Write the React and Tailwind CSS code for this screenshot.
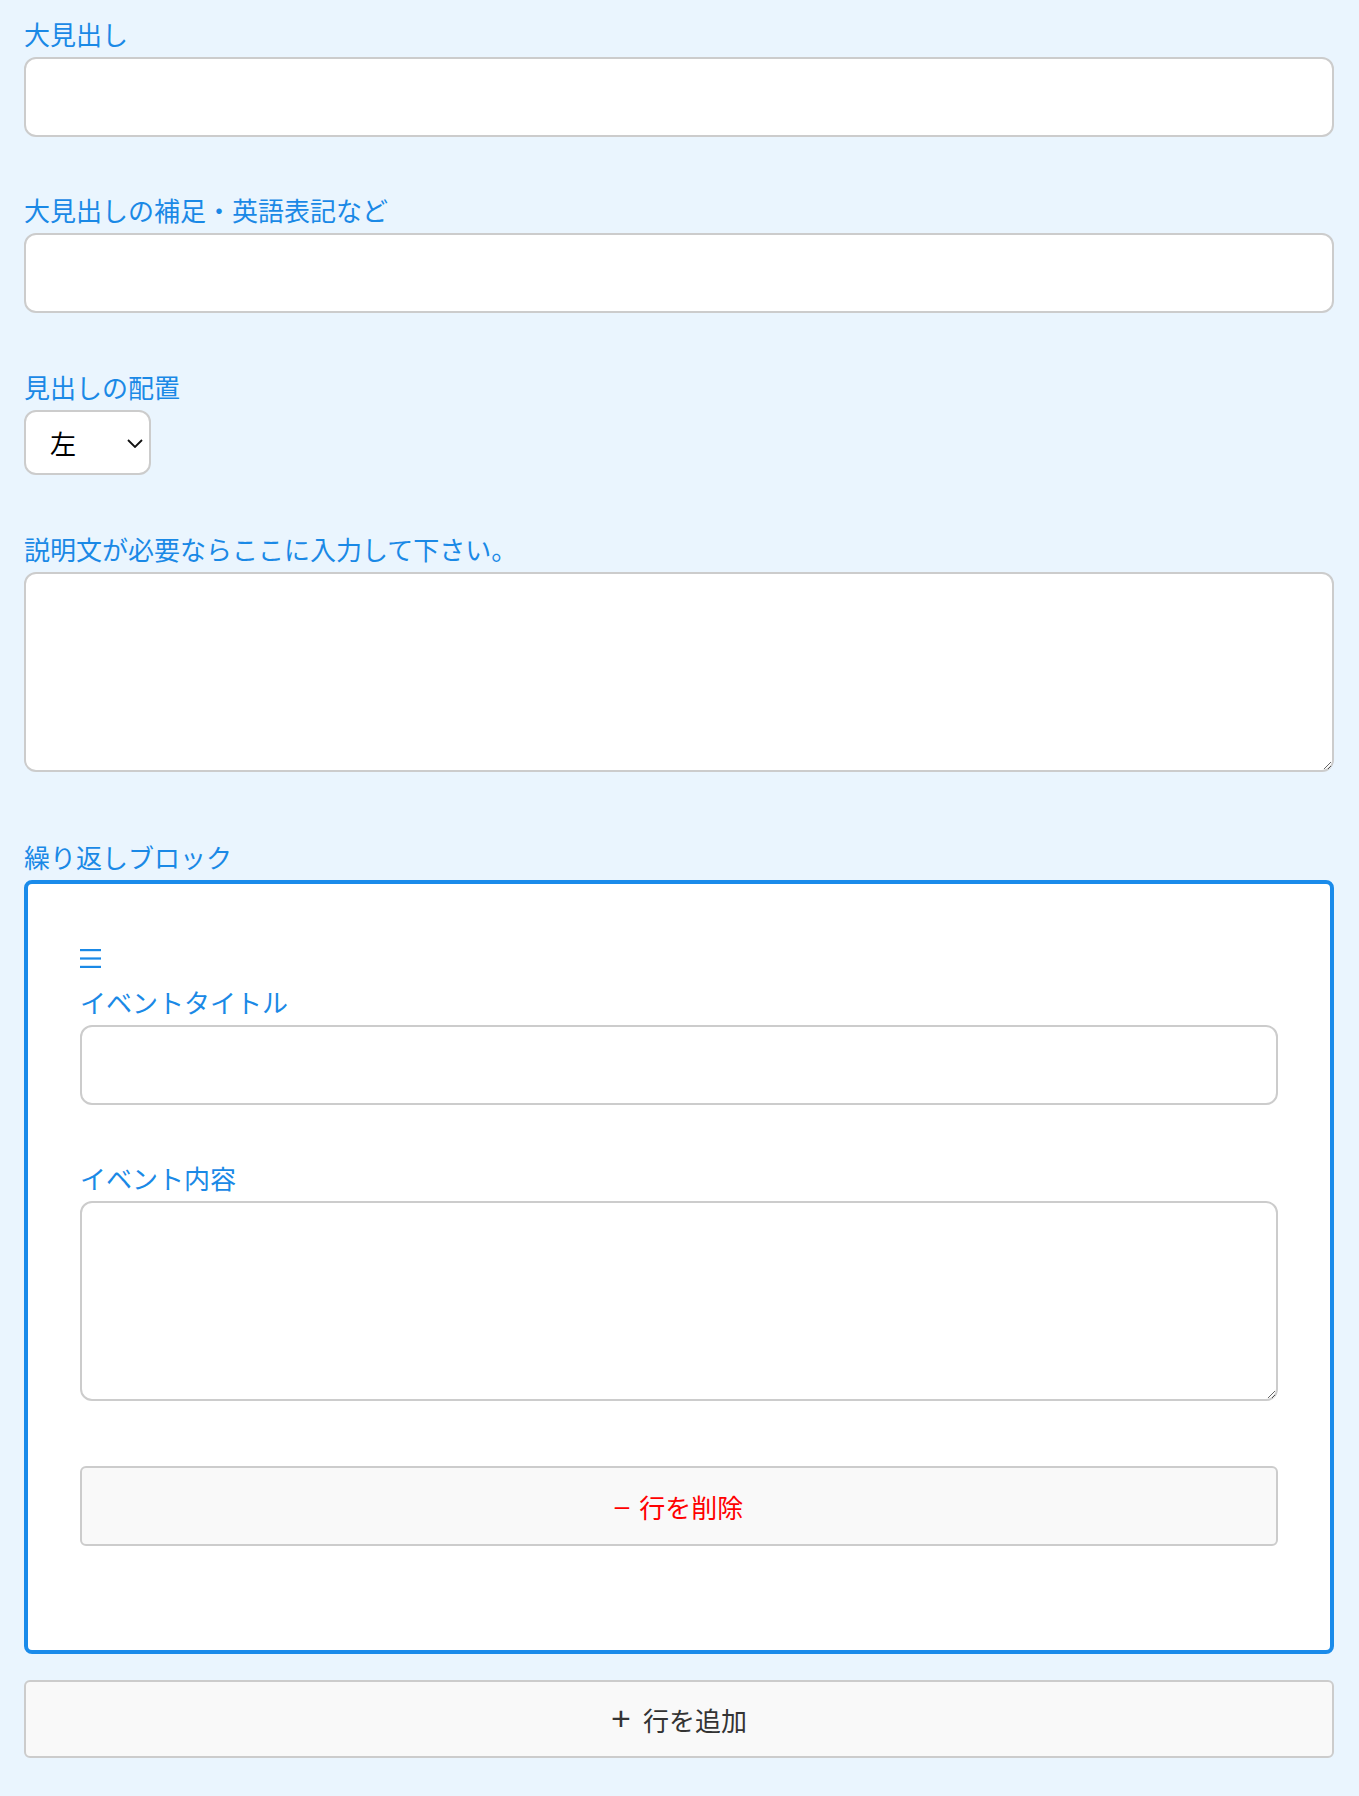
import { useState } from 'react';

const font = "font-['Noto_Sans_CJK_JP','Liberation_Sans',sans-serif]";
const labelCls = 'block text-[26px] leading-[36px] text-[#1a89e6] mb-[5px]';
const inputCls =
  'block w-full h-[80px] bg-white border-2 border-[#cccccc] rounded-[12px] px-4 text-[26px] outline-none';
const areaCls =
  'block w-full h-[200px] bg-white border-2 border-[#cccccc] rounded-[12px] px-4 py-3 text-[26px] outline-none';
const btnCls =
  'flex items-center justify-center w-full bg-[#f9f9f9] border-2 border-[#cccccc] rounded-[6px] text-[26px]';

function Field({ label, children, className = '' }) {
  return (
    <div className={className}>
      <label className={labelCls}>{label}</label>
      {children}
    </div>
  );
}

function Hamburger() {
  return (
    <svg width="21" height="19" viewBox="0 0 21 19" className="block">
      <rect x="0" y="0" width="21" height="2.2" fill="#1a89e6" />
      <rect x="0" y="8.4" width="21" height="2.2" fill="#1a89e6" />
      <rect x="0" y="16.8" width="21" height="2.2" fill="#1a89e6" />
    </svg>
  );
}

export default function App() {
  const [align, setAlign] = useState('left');

  return (
    <div className={`min-h-screen bg-[#eaf5fe] pl-[24px] pr-[25px] pt-[16px] pb-[40px] ${font}`}>
      <Field label="大見出し">
        <input type="text" className={inputCls} />
      </Field>

      <Field label="大見出しの補足・英語表記など" className="mt-[55px]">
        <input type="text" className={inputCls} />
      </Field>

      <Field label="見出しの配置" className="mt-[56px]">
        <div className="relative w-[127px] mt-[1px]">
          <select
            value={align}
            onChange={(e) => setAlign(e.target.value)}
            className="block w-[127px] h-[65px] appearance-none bg-white border-2 border-[#cccccc] rounded-[12px] pl-[24px] text-[26px] text-black outline-none"
          >
            <option value="left">左</option>
            <option value="center">中央</option>
            <option value="right">右</option>
          </select>
          <svg
            width="16"
            height="9"
            viewBox="0 0 16 9"
            className="absolute right-[8px] top-[29px] pointer-events-none"
          >
            <path d="M1 1 L8 8 L15 1" fill="none" stroke="#111" strokeWidth="1.8" />
          </svg>
        </div>
      </Field>

      <Field label="説明文が必要ならここに入力して下さい。" className="mt-[56px]">
        <textarea className={areaCls} />
      </Field>

      <Field label="繰り返しブロック" className="mt-[67px]">
        <div className="bg-white border-[4px] border-[#1a8bea] rounded-[8px] px-[52px] pt-[65px] pb-[104px]">
          <Hamburger />
          <Field label="イベントタイトル" className="mt-[16px]">
            <input type="text" className={inputCls} />
          </Field>
          <Field label="イベント内容" className="mt-[55px]">
            <textarea className={areaCls} />
          </Field>
          <button type="button" className={`mt-[65px] h-[80px] text-[#ff0000] ${btnCls}`}>
            <span className="font-['Liberation_Sans',sans-serif] mr-[10px]">–</span>
            <span>行を削除</span>
          </button>
        </div>
      </Field>

      <button type="button" className={`mt-[26px] h-[78px] text-[#333333] ${btnCls}`}>
        <span className="font-['Liberation_Sans',sans-serif] text-[34px] leading-none mr-[12px] -mt-[2px]">+</span>
        <span>行を追加</span>
      </button>
    </div>
  );
}
